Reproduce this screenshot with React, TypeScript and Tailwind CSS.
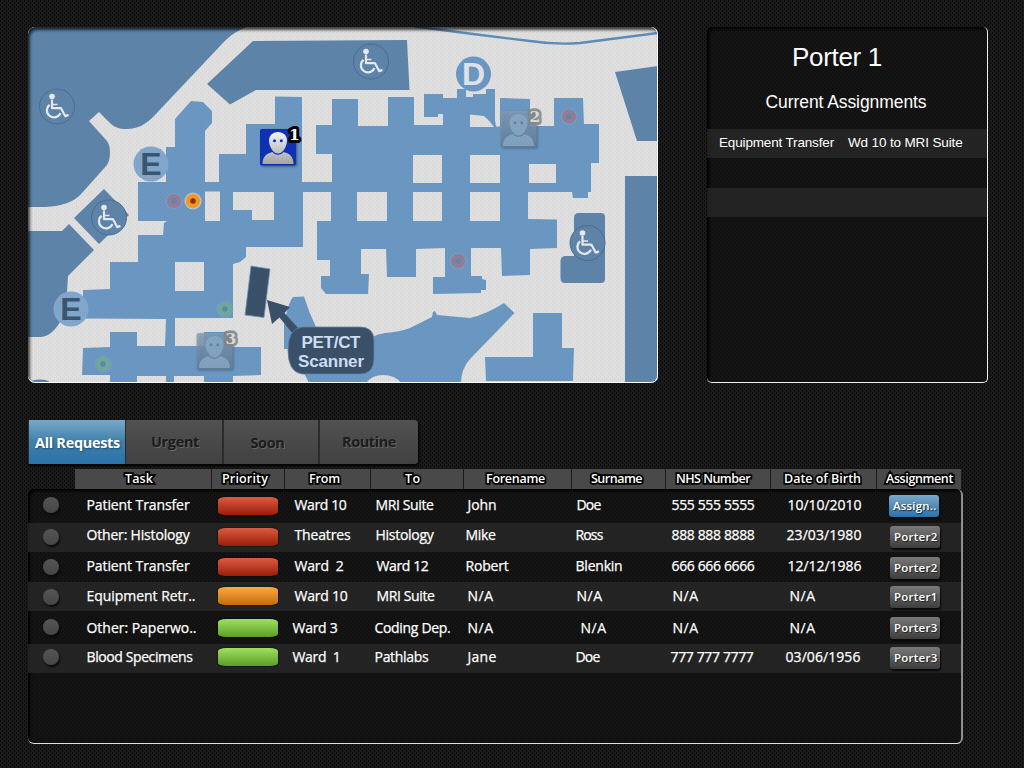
import { useLayoutEffect, useRef, useState } from "react";

/** Text whose letter spacing is tuned so that it takes up a given width. */
function Fit({ text, width, left = 0, className = "" }: { text: string; width: number; left?: number; className?: string }) {
  const ref = useRef<HTMLSpanElement>(null);
  const [spacing, setSpacing] = useState<number | null>(null);
  useLayoutEffect(() => {
    if (ref.current && spacing === null) {
      setSpacing((width + 1 - ref.current.getBoundingClientRect().width) / text.length);
    }
  }, [spacing, text, width]);
  return (
    <span
      ref={ref}
      className={`inline-block whitespace-pre ${className}`}
      style={{ letterSpacing: spacing === null ? undefined : `${spacing}px`, marginLeft: left }}
    >
      {text}
    </span>
  );
}

function Wheelchair({ x, y }: { x: number; y: number }) {
  return (
    <g transform={`translate(${x} ${y})`}>
      <circle r="17.5" fill="#5e84a9" stroke="#476b8e" strokeWidth="0.9" />
      <g fill="none" stroke="#e6eaef" strokeWidth="2.200">
        <path d="M-5 -7V1.7H4L8.2 9.6L11.5 8.4" strokeLinejoin="round" />
        <path d="M-5 -2H0.5" strokeWidth="1.7" />
        <path d="M-7.4 -1.6A7 7 0 1 0 3.4 6.6" />
      </g>
      <circle cx="-5" cy="-10" r="2.8" fill="#e6eaef" />
    </g>
  );
}

function Letter({ x, y, children, light }: { x: number; y: number; children: string; light?: boolean }) {
  return (
    <g>
      <circle cx={x} cy={y} r="17.5" fill={light ? "#6b98c2" : "#82a7cd"} />
      <text
        x={x}
        y={y + 11.2}
        textAnchor="middle"
        fontSize="32"
        fontWeight="700"
        fontFamily="Liberation Sans, sans-serif"
        fill={light ? "#e0e4ea" : "#3c556e"}
      >
        {children}
      </text>
    </g>
  );
}

function Porter({ x, y, n, active }: { x: number; y: number; n: string; active?: boolean }) {
  return (
    <g transform={`translate(${x} ${y})`}>
      <g filter="url(#drop)">
        <rect width="36" height="36.500" rx="2" fill={active ? "#0832b4" : "url(#dim)"} fillOpacity={active ? 1 : 0.75} />
      </g>
      <g fill={active ? "url(#silver)" : "#88aac9"} fillOpacity={active ? 1 : 0.8}>
        <path d="M18 3C12.5 3 9 6.600 9 11.500C9 16.500 12.500 24.500 18 24.500C23.500 24.500 27 16.500 27 11.500C27 6.600 23.500 3 18 3Z" />
        <path d="M2.500 35C2.500 28 6 24.500 12.500 23C15 26.500 21 26.500 23.500 23C30 24.500 33.500 28 33.500 35Z" />
      </g>
      <g fill={active ? "#0832b4" : "#66829e"}>
        <circle cx="14.500" cy="11.700" r="1.500" />
        <circle cx="21.300" cy="11.700" r="1.500" />
      </g>
      <text
        x="34.500"
        y="10.500"
        textAnchor="middle"
        fontSize="15.500"
        fontWeight="700"
        fontFamily="DejaVu Serif, serif"
        fill={active ? "#fff" : "#d8dadc"}
        stroke={active ? "#000" : "#858585"}
        strokeOpacity={active ? 1 : 0.85}
        strokeWidth={active ? 6 : 5.5}
        strokeLinejoin="round"
        paintOrder="stroke"
      >
        {n}
      </text>
    </g>
  );
}

function Dot({ x, y, color, core, glow }: { x: number; y: number; color: string; core: string; glow?: boolean }) {
  return (
    <g>
      <circle cx={x} cy={y} r="8.600" fill={glow ? "#e9c7c9" : "#8aa6c8"} fillOpacity={glow ? 0.75 : 0.35} />
      <circle cx={x} cy={y} r="4.900" fill={core} stroke={color} strokeWidth="4.400" />
    </g>
  );
}

function SiteMap() {
  return (
    <svg className="block h-full w-full" viewBox="28 27 630 356" preserveAspectRatio="none">
      <defs>
        <filter id="drop" x="-20%" y="-20%" width="150%" height="150%">
          <feDropShadow dx="1" dy="1" stdDeviation="1" floodColor="#1c2c3c" floodOpacity="0.6" />
        </filter>
        <linearGradient id="silver" gradientUnits="userSpaceOnUse" x1="0" y1="2" x2="0" y2="36">
          <stop offset="0" stopColor="#f7f7f7" />
          <stop offset="1" stopColor="#a3a3a5" />
        </linearGradient>
        <linearGradient id="dim" x1="0" y1="0" x2="0" y2="1">
          <stop offset="0" stopColor="#86a0ba" />
          <stop offset="1" stopColor="#647f9a" />
        </linearGradient>
        <pattern id="grain" width="4" height="4" patternUnits="userSpaceOnUse">
          <rect width="1" height="2" fill="#000" fillOpacity="0.03" />
          <rect x="2" y="2" width="1" height="2" fill="#000" fillOpacity="0.03" />
        </pattern>
      </defs>
      <rect x="28" y="27" width="630" height="356" fill="#dfdfdf" />

      <g fill="#5e84a9">
        <path d="M28 27H247C238 30 230 35 221 45L153 117C146 124 138 129 127 129C119 129 114 127 110 123L99 112L89 121L107 141Q110 145 110 153Q110 160 107 165L82 193Q71 206 45 207H28Z" />
        <path d="M207 84L253 41L407 40L409.500 90H256L230 104.500Z" />
        <path d="M104 189L129 215L99 244L74 218Z" />
        <path d="M28 231H62L69 224L94 250L68 276L67 292L60 322Q51 337 40 337H28Z" />
        <path d="M615 72L658 66V141H637Z" />
        <path d="M625 176H658V383H625Z" />
        <path d="M579 213H601Q605 213 605 217V279Q605 283 601 283H565Q560.500 283 560.500 278V261Q560.500 256.500 565 256H574V218Q574 213 579 213Z" />
        <ellipse cx="40" cy="383" rx="10" ry="3.500" />
      </g>

      <path
        fill="#6b98c2"
        d="M191 101L203 102L212 111V123L205 131V182H219V154H246V124H275V96.500L302 97V182H332V154H316V125H332V99H358V126H388V97H414V125H443V114H438V117H424V94H443V98H457V89H466V97H473V94H486V89H495V120L496 126.500H500V98L530 99V126H554V98H583L584 124H599V163H591V192H588V198H573L572 192H528V219L557 219.500V248L530 249V275L502 276L501 248H471V276H482V279L486 280V290H481V293L433 294V277H445V248L416 249V277H387L386 249H361V274H369L368 294H326L321 288V276H330V260H317V221H331V192H303V247H246V257L240 262L233 264V318H175V346H204V332H233V347H261V375L233 376V383H204V376H174V383H166V376H137V383H110V375H82L83 348L110 347V332H137V346H165L166 319L83 318.500V290L110 289V262H138V235H163L164 223L167 221H138V182H166V147H175V119Z"
      />
      <g fill="#dfdfdf">
        <path d="M205 191.500H220V221H205Z" />
        <path d="M233 192H274V220H252V210H233Z" />
        <path d="M175 262H204V291H175Z" />
        <path d="M357 192H387V221H357Z" />
        <path d="M413 155H442V183H413Z" />
        <path d="M413 192H442V221H413Z" />
        <path d="M470 155H500V183H470Z" />
        <path d="M470 192H500V221H470Z" />
        <path d="M529 164H556V183H529Z" />
        <path d="M470 114.500L484 116Q489 120 494 127H470Z" />
      </g>
      <g fill="#6b98c2">
        <path d="M284 325Q288 303 293 297L304 296.500Q309 313 316 327V349H284Z" />
        <path d="M300 360H372V337Q378 334 385 333Q400 332 410 328L432 317L433 312L435 311L437 315L470 318Q487 314 504 303L514.500 313L470 359Q461 369 461 383H401Q395 375 383 375Q372 375 366 383H309L304 373Z" />
        <path d="M533 313H562V348H574L573 381H486L485 357H533Z" />
      </g>
      <path d="M415 26.500L473 34L530 41Q557 45 580 43L658 33" fill="none" stroke="#5c8cb9" strokeWidth="2.300" />

      <g fill="#3a5169">
        <path d="M251 266L270 269L264 317.500L245 315Z" stroke="#6b98c2" strokeWidth="0.8" />
        <path d="M267 300L290 307L284.500 313L300 330L293 334L279.500 317.500L272 324Z" />
        <path d="M302 327H360Q374 327 374 341V358Q374 374 360 374H302Q288 372 288 350Q288 329 302 327Z" stroke="#5d83a8" strokeWidth="0.8" />
      </g>
      <g fill="#cfdff3" fontFamily="Liberation Sans, sans-serif" fontSize="17" fontWeight="700">
        <text x="301.500" y="348" textLength="59">PET/CT</text>
        <text x="298" y="366.500" textLength="66">Scanner</text>
      </g>

      <Wheelchair x={57} y={106.500} />
      <Wheelchair x={371} y={61.500} />
      <Wheelchair x={109} y={217.500} />
      <Wheelchair x={587.500} y={243} />
      <Letter x={151} y={164}>E</Letter>
      <Letter x={71} y={309}>E</Letter>
      <Letter x={473.500} y={74} light>D</Letter>

      <Dot x={174} y={201} color="#957d95" core="#5f86b0" />
      <Dot x={569} y={116.500} color="#957d95" core="#5f86b0" />
      <Dot x={458} y={261} color="#957d95" core="#5f86b0" />
      <Dot x={225} y={309} color="#6daa9b" core="#5f86b0" />
      <Dot x={103} y={364} color="#6daa9b" core="#5f86b0" />
      <Dot x={193} y={201} color="#f09a1e" core="#8c2c28" glow />

      <Porter x={260} y={129} n="1" active />
      <Porter x={500.500} y={111} n="2" />
      <Porter x={196.500} y={333} n="3" />
      <rect x="28" y="27" width="630" height="356" fill="url(#grain)" />
    </svg>
  );
}

const headers: [string, number, number][] = [
  ["Task", 50, 27],
  ["Priority", 10, 45],
  ["From", 24, 30],
  ["To", 34, 14.5],
  ["Forename", 22, 58],
  ["Surname", 19, 50],
  ["NHS Number", 10, 73],
  ["Date of Birth", 13, 76],
  ["Assignment", 9, 66],
];

// Left edge of each text column, in the order of a row's cells.
const columnStart = [75, 285, 371, 464, 572, 666, 771];

const red = "from-[#dc5a40] to-[#9a1c05]";
const amber = "from-[#fdaa40] to-[#c36c05]";
const green = "from-[#a0e060] to-[#5c9e26]";

type Row = {
  band: string;
  textTop: string;
  dotTop: string;
  pillTop: string;
  buttonTop: string;
  color: string;
  cells: [string, number, number][];
  porter: string;
};

const rows: Row[] = [
  {
    band: "h-[33px]", textTop: "mt-[5px]", dotTop: "mt-[7px]", pillTop: "mt-[7px]", buttonTop: "mt-[5px]", color: red, porter: "Assign..",
    cells: [["Patient Transfer", 87, 102], ["Ward 10", 295, 51], ["MRI Suite", 376, 57], ["John", 468, 28], ["Doe", 577, 23], ["555 555 5555", 672, 82], ["10/10/2010", 788, 73]],
  },
  {
    band: "h-[29px] bg-[#2b292a]/75", textTop: "mt-[2px]", dotTop: "mt-[6px]", pillTop: "mt-[5px]", buttonTop: "mt-[3px]", color: red, porter: "Porter2",
    cells: [["Other: Histology", 87, 102], ["Theatres", 295, 55], ["Histology", 376, 57], ["Mike", 466, 29], ["Ross", 576, 26], ["888 888 8888", 672, 82], ["23/03/1980", 787, 74]],
  },
  {
    band: "h-[30px]", textTop: "mt-[4px]", dotTop: "mt-[7px]", pillTop: "mt-[6px]", buttonTop: "mt-[5px]", color: red, porter: "Porter2",
    cells: [["Patient Transfer", 87, 102], ["Ward  2", 295, 48], ["Ward 12", 377, 51], ["Robert", 466, 42], ["Blenkin", 576, 46], ["666 666 6666", 672, 82], ["12/12/1986", 788, 73]],
  },
  {
    band: "h-[29px] bg-[#2b292a]/75", textTop: "mt-[4px]", dotTop: "mt-[7px]", pillTop: "mt-[5px]", buttonTop: "mt-[4px]", color: amber, porter: "Porter1",
    cells: [["Equipment Retr..", 87, 108], ["Ward 10", 295, 52], ["MRI Suite", 377, 57], ["N/A", 468, 25], ["N/A", 577, 25], ["N/A", 673, 25], ["N/A", 790, 25]],
  },
  {
    band: "h-[33px]", textTop: "mt-[7px]", dotTop: "mt-[8px]", pillTop: "mt-[8px]", buttonTop: "mt-[6px]", color: green, porter: "Porter3",
    cells: [["Other: Paperwo..", 87, 109], ["Ward 3", 293, 44], ["Coding Dep.", 375, 75], ["N/A", 468, 25], ["N/A", 581, 25], ["N/A", 673, 25], ["N/A", 790, 25]],
  },
  {
    band: "h-[29px] bg-[#2b292a]/75", textTop: "mt-[3px]", dotTop: "mt-[5px]", pillTop: "mt-[4px]", buttonTop: "mt-[3px]", color: green, porter: "Porter3",
    cells: [["Blood Specimens", 87, 105], ["Ward  1", 293, 47], ["Pathlabs", 375, 53], ["Jane", 468, 28], ["Doe", 576, 23], ["777 777 7777", 671, 82], ["03/06/1956", 786, 74]],
  },
];

const grid = "grid grid-cols-[47px_137px_73px_86px_93px_108px_94px_105px_106px_85px]";
const weave =
  "bg-[#1b1b1b] bg-[image:conic-gradient(at_1px_2px,transparent_75%,#080808_0),conic-gradient(at_1px_2px,transparent_75%,#080808_0)] bg-[length:4px_4px] bg-[position:0_0,2px_2px]";

function TextCell({ cell, index, top }: { cell: [string, number, number]; index: number; top: string }) {
  return (
    <div className={`flex leading-[20px] ${top}`}>
      <Fit text={cell[0]} left={cell[1] - columnStart[index] - 0.5} width={cell[2]} />
    </div>
  );
}

export default function App() {
  return (
    <div className={`flex h-[768px] w-[1024px] flex-col overflow-hidden pt-[27px] pl-[28px] text-white ${weave}`}>
      <div className="flex gap-[49px]">
        <div className="relative h-[356px] w-[630px] overflow-hidden rounded-[7px]">
          <SiteMap />
          <div className="absolute inset-0 rounded-[7px] border-r-[1.5px] border-b-[1.5px] border-white shadow-[inset_2px_3px_3px_rgba(0,0,0,0.7)]" />
        </div>
        <section className="flex h-[356px] w-[281px] flex-col rounded-[5px] border-r border-b border-[#f2f2f2] bg-[#111111]/70 font-['Liberation_Sans',sans-serif] shadow-[inset_2px_2px_3px_#000]">
          <h1 className="mt-[14px] ml-[85px] h-[32px] text-[26px] leading-[32px]">
            <Fit text="Porter 1" width={89} />
          </h1>
          <h2 className="mt-[17px] ml-[58.5px] h-[24px] text-[17.5px] leading-[24px]">
            <Fit text="Current Assignments" width={160} />
          </h2>
          <div className="mt-[15px] flex h-[29px] bg-[#2b292a]/75 pl-[12px] text-[13.5px] leading-[28px]">
            <Fit text="Equipment Transfer" width={114} />
            <Fit text="Wd 10 to MRI Suite" width={113.5} left={14} />
          </div>
          <div className="mt-[30px] h-[29px] bg-[#2b292a]/75" />
        </section>
      </div>

      <nav className="mt-[37px] flex h-[44px] w-[390px] overflow-hidden rounded-r-[4px] bg-[#2b2b2b] pl-px font-['Open_Sans',sans-serif] text-[14.5px] font-bold leading-[45px] text-[#1c1c1c] shadow-[1px_2px_3px_#000]">
        <button className="flex w-[96px] bg-gradient-to-b from-[#77a8ca] via-[#3f7fab] to-[#2a72a8] pl-[6px] text-white [text-shadow:1px_1px_2px_#1c4a6c]">
          <Fit text="All Requests" width={84} />
        </button>
        <button className="ml-px flex w-[97px] border-r border-[#2b2b2b] bg-gradient-to-b from-[#515151] to-[#414141] pl-[25px] leading-[43px] [text-shadow:1px_1px_0_#666]">
          <Fit text="Urgent" width={47} />
        </button>
        <button className="ml-px flex w-[95px] border-r border-[#2b2b2b] bg-gradient-to-b from-[#515151] to-[#414141] pl-[26.5px] [text-shadow:1px_1px_0_#666]">
          <Fit text="Soon" width={33} />
        </button>
        <button className="ml-px flex w-[98px] bg-gradient-to-b from-[#515151] to-[#414141] pl-[22px] leading-[43px] [text-shadow:1px_1px_0_#666]">
          <Fit text="Routine" width={53} />
        </button>
      </nav>

      <div className="mt-[5px] w-[934px] font-['Open_Sans',sans-serif] font-medium">
        <div className={`${grid} h-[20px] text-[12.5px] font-semibold leading-[19px]`}>
          <div />
          {headers.map(([label, left, width], i) => (
            <div
              key={label}
              className={`flex bg-[#494949] [paint-order:stroke_fill] [-webkit-text-stroke:3.5px_#000] [text-shadow:0_0_2px_#000] ${i < 8 ? "border-r border-[#1b1b1b]" : "mr-px"}`}
            >
              <Fit text={label} left={left} width={width} />
            </div>
          ))}
        </div>
        <div className="h-[255px] w-[935px] rounded-[6px] border-r-2 border-b border-r-[#8f8f8f] border-b-[#e0e0e0] bg-[#111111]/70 pt-px shadow-[inset_2px_2px_3px_#000] text-[14px]">
          {rows.map((row, i) => (
            <div key={i} className={`${grid} w-[933px] ${row.band}`}>
              <div className={`ml-[15px] size-4 rounded-full bg-gradient-to-b from-[#555] to-[#454545] shadow-[1px_2px_2px_#0a0a0a] ${row.dotTop}`} />
              <div className="flex [-webkit-text-stroke:0.25px_#fff]">
                <TextCell cell={row.cells[0]} index={0} top={row.textTop} />
              </div>
              <div className={`ml-[6px] h-[18px] w-[60px] rounded-[8px/3px] bg-gradient-to-b shadow-[0_0_2px_#000] ${row.color} ${row.pillTop}`} />
              {row.cells.slice(1).map((cell, j) => (
                <div key={j} className="flex [-webkit-text-stroke:0.25px_#fff]">
                  <TextCell cell={cell} index={j + 1} top={row.textTop} />
                </div>
              ))}
              <button
                className={`flex h-[22px] w-[50px] rounded-[3px] bg-gradient-to-b pl-[4px] text-[11.5px] font-semibold leading-[21px] shadow-[1px_2px_2px_#080808] [text-shadow:1px_1px_1px_#222] ${row.buttonTop} ${
                  i === 0 ? "ml-[12px] from-[#77a8ca] to-[#2a72a8]" : "ml-[13px] from-[#7a7a7a] to-[#3d3d3d]"
                }`}
              >
                <Fit text={row.porter} width={42.5} />
              </button>
            </div>
          ))}
        </div>
      </div>
    </div>
  );
}
